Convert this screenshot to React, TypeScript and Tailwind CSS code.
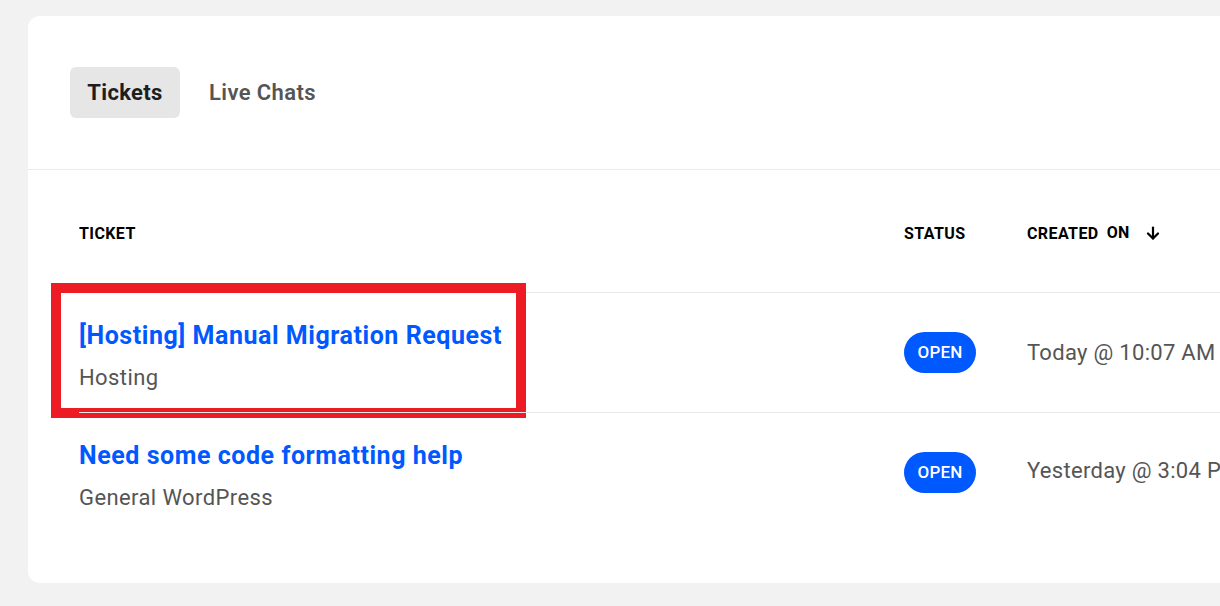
import React from "react";

const font = { fontFamily: "Roboto, 'Liberation Sans', sans-serif" };

function ArrowDown() {
  return (
    <svg width="14" height="14" viewBox="0 0 14 14" fill="none" stroke="#000" strokeWidth="2.2" strokeLinecap="round" strokeLinejoin="round">
      <path d="M7 1.5v11" />
      <path d="M2 7.5l5 5 5-5" />
    </svg>
  );
}

function Badge() {
  return (
    <span className="inline-flex items-center justify-center h-[41px] w-[72px] rounded-full bg-[#0058ff] text-white text-[17px] font-medium tracking-[0.2px]">
      OPEN
    </span>
  );
}

function Row({ title, sub, date, first, highlight }: { title: string; sub: string; date: string; first?: boolean; highlight?: boolean }) {
  return (
    <div className="relative flex items-center h-[120px] border-t border-[#e9e9e9]">
      <div className="w-[825px] pt-[6px]">
        <div className="text-[25px] leading-[28px] font-bold text-[#0058ff] tracking-[0.55px]">{title}</div>
        <div className="mt-[16px] text-[22px] leading-[24px] text-[#555555] tracking-[0.4px]">{sub}</div>
      </div>
      <div className="w-[123px]">
        <Badge />
      </div>
      <div className={`text-[22px] text-[#555555] whitespace-nowrap tracking-[0.3px] ${first ? "" : "-mt-[4px]"}`}>{date}</div>
      {highlight && (
        <div className="absolute left-[-28px] top-[-10px] w-[475px] h-[135px] border-[10px] border-[#ed1c24] pointer-events-none" />
      )}
    </div>
  );
}

export default function App() {
  return (
    <div className="w-[1220px] h-[606px] overflow-hidden bg-[#f2f2f2] pt-[16px] pl-[28px]" style={font}>
      <div className="w-[1260px] h-[567px] bg-white rounded-[12px]">
        <div className="flex items-center gap-[29px] px-[42px] pt-[51px] pb-[51px] border-b border-[#ebebeb]">
          <div className="h-[51px] w-[110px] rounded-[6px] bg-[#e6e6e6] flex items-center justify-center text-[22px] font-bold text-[#1e1e1e] tracking-[0.35px]">
            Tickets
          </div>
          <div className="text-[22px] font-semibold text-[#555555] tracking-[0.4px]">Live Chats</div>
        </div>
        <div className="pl-[51px]">
          <div className="flex items-center pt-[56px] pb-[50px] text-[16px] leading-[16px] font-bold text-black uppercase tracking-[0.4px]">
            <div className="w-[825px]">Ticket</div>
            <div className="w-[123px]">Status</div>
            <div className="flex items-center">
              <span>Created</span>
              <span className="ml-[8px] -mt-[3px]">On</span>
              <span className="ml-[16px] -mt-[3px]"><ArrowDown /></span>
            </div>
          </div>
          <Row title="[Hosting] Manual Migration Request" sub="Hosting" date="Today @ 10:07 AM" first highlight />
          <Row title="Need some code formatting help" sub="General WordPress" date="Yesterday @ 3:04 PM" />
        </div>
      </div>
    </div>
  );
}
